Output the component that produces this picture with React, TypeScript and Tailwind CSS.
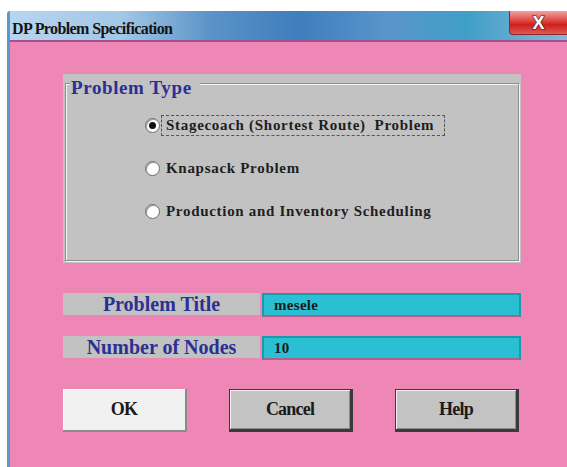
import React from "react";

const serif = { fontFamily: '"Liberation Serif", "Times New Roman", serif' };

function Radio({ checked }: { checked?: boolean }) {
  return (
    <span className="relative flex h-[15px] w-[15px] shrink-0 items-center justify-center rounded-full border border-[#6b6b6b] bg-white shadow-[inset_1px_1px_0_#9a9a9a]">
      {checked && <span className="h-[7px] w-[7px] rounded-full bg-[#111]" />}
    </span>
  );
}

function Option({ label, checked, focused }: { label: string; checked?: boolean; focused?: boolean }) {
  return (
    <div className="flex h-[21px] items-center">
      <Radio checked={checked} />
      <span
        className={
          "ml-[1px] flex h-[21px] items-center whitespace-pre pl-[4px] pr-[10px] text-[15px] font-bold tracking-[0.7px] text-[#1e1e1e] " +
          (focused ? "border border-dashed border-[#555]" : "border border-transparent")
        }
        style={serif}
      >
        {label}
      </span>
    </div>
  );
}

function FieldRow({ label, value }: { label: string; value: string }) {
  return (
    <div className="flex items-start gap-[2px]">
      <div
        className="flex h-[22px] w-[197px] items-center justify-center bg-[#c2c2c2] text-[20px] font-bold tracking-[0px] text-[#2b3092]"
        style={serif}
      >
        {label}
      </div>
      <div
        className="flex h-[24px] w-[259px] items-center border-2 border-l-[#1b9aa9] border-t-[#1b9aa9] border-r-[#1b9aa9] border-b-[#b0608e] bg-[#2bbfd4] pl-[10px] text-[15px] font-bold tracking-[0.3px] text-[#1b1b1b]"
        style={serif}
      >
        {value}
      </div>
    </div>
  );
}

function Button({ label, light }: { label: string; light?: boolean }) {
  return (
    <div
      className={
        "flex h-[43px] w-[124px] items-center justify-center text-[18px] font-bold tracking-[-0.8px] text-[#1a1a1a] " +
        (light
          ? "border-b-2 border-r-2 border-b-[#8a8a8a] border-r-[#8a8a8a] bg-[#f1f1f1] shadow-[inset_1px_1px_0_#ffffff]"
          : "border border-b-[3px] border-r-[3px] border-[#3a3a3a] bg-[#c3c3c3] shadow-[inset_1px_1px_0_#f5f5f5,inset_-1px_-1px_0_#8a8a8a]")
      }
      style={serif}
    >
      {label}
    </div>
  );
}

export default function App() {
  return (
    <div className="h-[467px] w-[567px] overflow-hidden bg-white pl-[7px] pt-[11px]">
      <div className="flex h-full flex-col overflow-hidden rounded-tl-[3px] border-l-[3px] border-l-[#5a97cf]">
        {/* title bar */}
        <div className="flex h-[29px] shrink-0 items-start bg-[linear-gradient(90deg,#b7d5ee_0%,#a3c7e6_20%,#5b93c8_36%,#3f7dbd_52%,#5a95cb_68%,#3f9fc6_82%,#86b7dc_100%)]">
          <div
            className="pl-[2px] pt-[6px] text-[16px] font-bold tracking-[-0.6px] text-[#141414]"
            style={serif}
          >
            DP Problem Specification
          </div>
          <div className="ml-auto flex h-[24px] w-[58px] items-center justify-center rounded-bl-[4px] border-b border-l border-[#8a2a2a] bg-[linear-gradient(180deg,#f0a3a0_0%,#e24a43_40%,#cf1f1f_60%,#e05a52_100%)]">
            <span
              className="text-[18px] font-black leading-none text-white"
              style={{ fontFamily: '"Liberation Sans", Arial, sans-serif', WebkitTextStroke: "1.2px #2a2a2a", paintOrder: "stroke fill" }}
            >
              X
            </span>
          </div>
        </div>
        <div className="h-[2px] shrink-0 bg-[#a4508f]" />

        {/* dialog body */}
        <div className="flex flex-1 flex-col bg-[#ee87b5] pl-[53px] pt-[32px]">
          {/* group box */}
          <div className="h-[189px] w-[458px] bg-[#c2c2c2] pb-[2px] pl-[2px] pr-[2px] pt-[9px]">
            <div className="relative h-full border border-[#8e8e8e] shadow-[1px_1px_0_#f4f4f4,inset_1px_1px_0_#f4f4f4]">
              <div
                className="absolute left-[4px] top-[-7px] bg-[#c2c2c2] pl-[1px] pr-[8px] text-[19px] font-bold leading-[22px] tracking-[0.6px] text-[#2b3092]"
                style={serif}
              >
                Problem Type
              </div>
              <div className="flex flex-col gap-[22px] pl-[79px] pt-[31px]">
                <Option label="Stagecoach (Shortest Route)  Problem" checked focused />
                <Option label="Knapsack Problem" />
                <Option label="Production and Inventory Scheduling" />
              </div>
            </div>
          </div>

          {/* fields */}
          <div className="mt-[30px] flex flex-col gap-[19px]">
            <FieldRow label="Problem Title" value="mesele" />
            <FieldRow label="Number of Nodes" value="10" />
          </div>

          {/* buttons */}
          <div className="mt-[29px] flex gap-[42px]">
            <Button label="OK" light />
            <Button label="Cancel" />
            <Button label="Help" />
          </div>
        </div>
      </div>
    </div>
  );
}
